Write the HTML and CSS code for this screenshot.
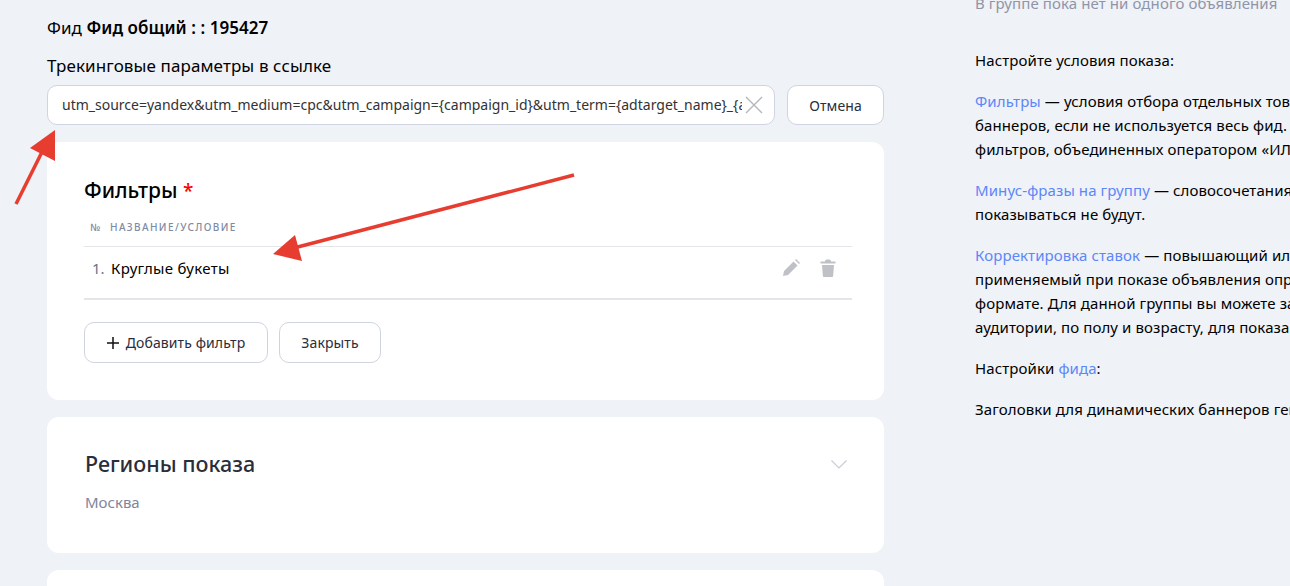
FILE: index.html
```html
<!DOCTYPE html>
<html lang="ru">
<head>
    <meta charset="UTF-8">
    <title>Фид общий</title>
    <link rel="stylesheet" href="styles.css">
</head>
<body>
<div class="page">
    <div class="main">
        <div class="feed-title">Фид <b>Фид общий : : 195427</b></div>
        <div class="field-label">Трекинговые параметры в ссылке</div>
        <div class="field-row">
            <div class="field">
                <input class="field-input" type="text" value="utm_source=yandex&amp;utm_medium=cpc&amp;utm_campaign={campaign_id}&amp;utm_term={adtarget_name}_{adtarget_id}">
                <svg class="field-clear" width="18" height="18" viewBox="0 0 18 18"><path d="M1 1l16 16M17 1L1 17" fill="none" stroke="#b4b6ba" stroke-width="1.4"/></svg>
            </div>
            <button class="btn btn-cancel" type="button">Отмена</button>
        </div>

        <div class="card card-filters">
            <h2 class="card-title">Фильтры <span class="required">*</span></h2>
            <div class="table-head"><span class="col-num">№</span><span>Название/условие</span></div>
            <div class="table-row">
                <span class="row-num">1.</span>
                <span class="row-name">Круглые букеты</span>
                <svg class="row-icon" width="18" height="18" viewBox="0 0 18 18"><path d="M1 17l1-5L11.500 2.500l4 4L6 16zM13 1l1-1 4 4-1 1z" fill="#bfc1c6"/></svg>
                <svg class="row-icon" width="16" height="18" viewBox="0 0 16 18"><path d="M5 2.500C5 1 6 .5 8 .5s3 .5 3 2h4.500v2H.5v-2zM2 6h12l-.8 10.500c-.1 1-.7 1.500-1.700 1.500H4.500c-1 0-1.600-.5-1.700-1.500z" fill="#bfc1c6"/></svg>
            </div>
            <div class="card-actions">
                <button class="btn btn-add" type="button"><svg width="12" height="12" viewBox="0 0 12 12"><path d="M6 0v12M0 6h12" stroke="#111" stroke-width="1.500"/></svg>Добавить фильтр</button>
                <button class="btn btn-close" type="button">Закрыть</button>
            </div>
        </div>

        <div class="card card-regions">
            <div class="regions-head">
                <h2 class="regions-title">Регионы показа</h2>
                <svg width="16" height="9" viewBox="0 0 16 9"><path d="M.5.5L8 8l7.500-7.500" fill="none" stroke="#c9ccd3" stroke-width="1.200"/></svg>
            </div>
            <div class="regions-value">Москва</div>
        </div>

        <div class="card card-next"></div>
    </div>

    <div class="help">
        <p class="help-muted">В группе пока нет ни одного объявления</p>
        <p>Настройте условия показа:</p>
        <p><a href="#">Фильтры</a> — условия отбора отдельных товаров из фида для показа<br>баннеров, если не используется весь фид. Можно задать несколько<br>фильтров, объединенных оператором «ИЛИ».</p>
        <p><a href="#">Минус-фразы на группу</a> — словосочетания, по которым объявления<br>показываться не будут.</p>
        <p><a href="#">Корректировка ставок</a> — повышающий или понижающий коэффициент,<br>применяемый при показе объявления определенной аудитории или в<br>формате. Для данной группы вы можете задать корректировки по<br>аудитории, по полу и возрасту, для показа на мобильных.</p>
        <p>Настройки <a href="#">фида</a>:</p>
        <p>Заголовки для динамических баннеров генерируются автоматически.</p>
    </div>
</div>

<svg class="arrows" width="600" height="280" viewBox="0 0 600 280">
    <path d="M16 204L44 148" stroke="#e73c30" stroke-width="3.500" fill="none"/>
    <path d="M55 130L30 148L55 161z" fill="#e73c30"/>
    <path d="M574 175L290 249" stroke="#e73c30" stroke-width="3.500" fill="none"/>
    <path d="M273 254L295 235L302 261z" fill="#e73c30"/>
</svg>
</body>
</html>
```

FILE: styles.css
```css
html, body {
    margin: 0;
    height: 586px;
    overflow: hidden;
    background: #eff2f7;
    font-family: "Noto Sans", sans-serif;
    color: #000;
}

.page {
    display: flex;
    width: 1290px;
    height: 586px;
    overflow: hidden;
    position: relative;
}

.main {
    flex: none;
    width: 837px;
    margin-left: 47px;
    padding-top: 18px;
}

.feed-title {
    font-size: 17px;
    line-height: 20px;
    letter-spacing: .05px;
}

.feed-title b {
    font-weight: 600;
}

.field-label {
    margin-top: 18px;
    font-size: 17px;
    line-height: 20px;
    letter-spacing: .1px;
}

.field-row {
    display: flex;
    gap: 12px;
    margin-top: 9px;
}

.field {
    flex: none;
    display: flex;
    align-items: center;
    box-sizing: border-box;
    width: 728px;
    height: 40px;
    padding: 0 11px 0 14px;
    background: #fff;
    border: 1px solid #d0d4e0;
    border-radius: 10px;
}

.field-input {
    flex: 1;
    min-width: 0;
    padding: 0 0 2px;
    border: 0;
    outline: 0;
    background: none;
    font: 14px "Noto Sans", sans-serif;
    color: #333;
}

.field-clear {
    flex: none;
    margin-left: 3px;
}

.btn {
    box-sizing: border-box;
    height: 40px;
    padding: 0;
    background: #fff;
    border: 1px solid #d0d4e0;
    border-radius: 10px;
    font: 14px "Noto Sans", sans-serif;
    letter-spacing: .1px;
    color: #2a2d3a;
}

.btn-cancel {
    width: 97px;
}

.card {
    background: #fff;
    border-radius: 12px;
    margin-top: 17px;
}

.card-filters {
    height: 258px;
    padding: 35px 32px 0 37px;
    box-sizing: border-box;
}

.card-title {
    margin: 0;
    font-size: 21px;
    line-height: 26px;
    font-weight: 500;
}

.required {
    font-size: 19px;
    color: #f00;
}

.table-head {
    display: flex;
    height: 34px;
    margin-top: 8px;
    padding: 0 0 4px 6px;
    box-sizing: border-box;
    align-items: center;
    font-size: 10px;
    font-weight: 500;
    letter-spacing: 1.4px;
    text-transform: uppercase;
    color: #7f8aa3;
}

.col-num {
    width: 20px;
    text-transform: none;
}

.table-row {
    display: flex;
    align-items: center;
    height: 54px;
    box-sizing: border-box;
    border-top: 1px solid #e4e5e8;
    border-bottom: 2px solid #e4e5e8;
    padding: 0 16px 9px 8px;
    font-size: 15px;
}

.row-num {
    width: 19px;
    color: #6c7486;
}

.row-name {
    flex: 1;
    letter-spacing: .3px;
}

.row-icon {
    margin-left: 20px;
}

.card-actions {
    display: flex;
    gap: 11px;
    margin-top: 22px;
}

.card-actions .btn {
    height: 41px;
}

.btn-add {
    display: flex;
    align-items: center;
    justify-content: center;
    gap: 7px;
    width: 184px;
}

.btn-close {
    width: 102px;
}

.card-regions {
    height: 136px;
    padding: 33px 37px 0 38px;
    box-sizing: border-box;
}

.regions-head {
    display: flex;
    align-items: center;
    justify-content: space-between;
}

.regions-title {
    margin: 0;
    font-size: 21.500px;
    line-height: 28px;
    font-weight: 500;
    color: #2a2d3a;
}

.regions-value {
    margin-top: 12px;
    font-size: 15px;
    line-height: 24px;
    color: #80859b;
}

.card-next {
    height: 60px;
}

.help {
    flex: none;
    margin: -9px 0 0 91px;
    font-size: 15px;
    line-height: 24px;
    letter-spacing: .1px;
    white-space: nowrap;
}

.help p {
    margin: 0 0 17px;
}

.help .help-muted {
    margin-bottom: 33px;
    color: #8f95a8;
}

.help a {
    color: #5c87f7;
    text-decoration: none;
}

.arrows {
    position: absolute;
    left: 0;
    top: 0;
}
```
